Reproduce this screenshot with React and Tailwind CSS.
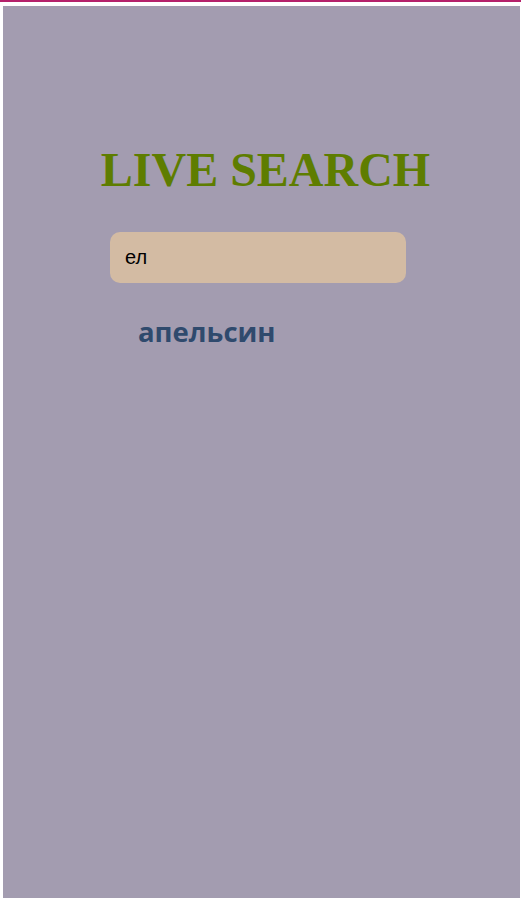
import { useState } from 'react';

const fruits = ['апельсин', 'яблоко', 'банан', 'груша'];

export default function App() {
  const [query, setQuery] = useState('ел');
  const results = fruits.filter((fruit) => fruit.includes('ель') || fruit.includes(query));

  return (
    <div className="min-h-screen bg-white border-t-2 border-[#b5226b] pt-[4px] pl-[3px] pr-px">
      <div className="flex h-[892px] flex-col bg-[#a39cb0]">
        <h1 className="mt-[140px] ml-2 text-center font-['Liberation_Serif','Times_New_Roman',serif] text-[48px] font-bold leading-none text-[#5e7d00]">
          LIVE SEARCH
        </h1>

        <input
          value={query}
          onChange={(event) => setQuery(event.target.value)}
          autoFocus
          className="mt-[38px] ml-[107px] h-[51px] w-[296px] rounded-[10px] bg-[#d3bba3] px-[15px] font-['Liberation_Sans',Arial,sans-serif] text-[20px] text-black caret-black outline-none"
        />

        <ul className="mt-[35px] ml-[135px]">
          {results.map((fruit) => (
            <li
              key={fruit}
              className="font-['Open_Sans',sans-serif] text-[27.5px] font-bold leading-none text-[#2f4a6d]"
            >
              {fruit}
            </li>
          ))}
        </ul>
      </div>
    </div>
  );
}
